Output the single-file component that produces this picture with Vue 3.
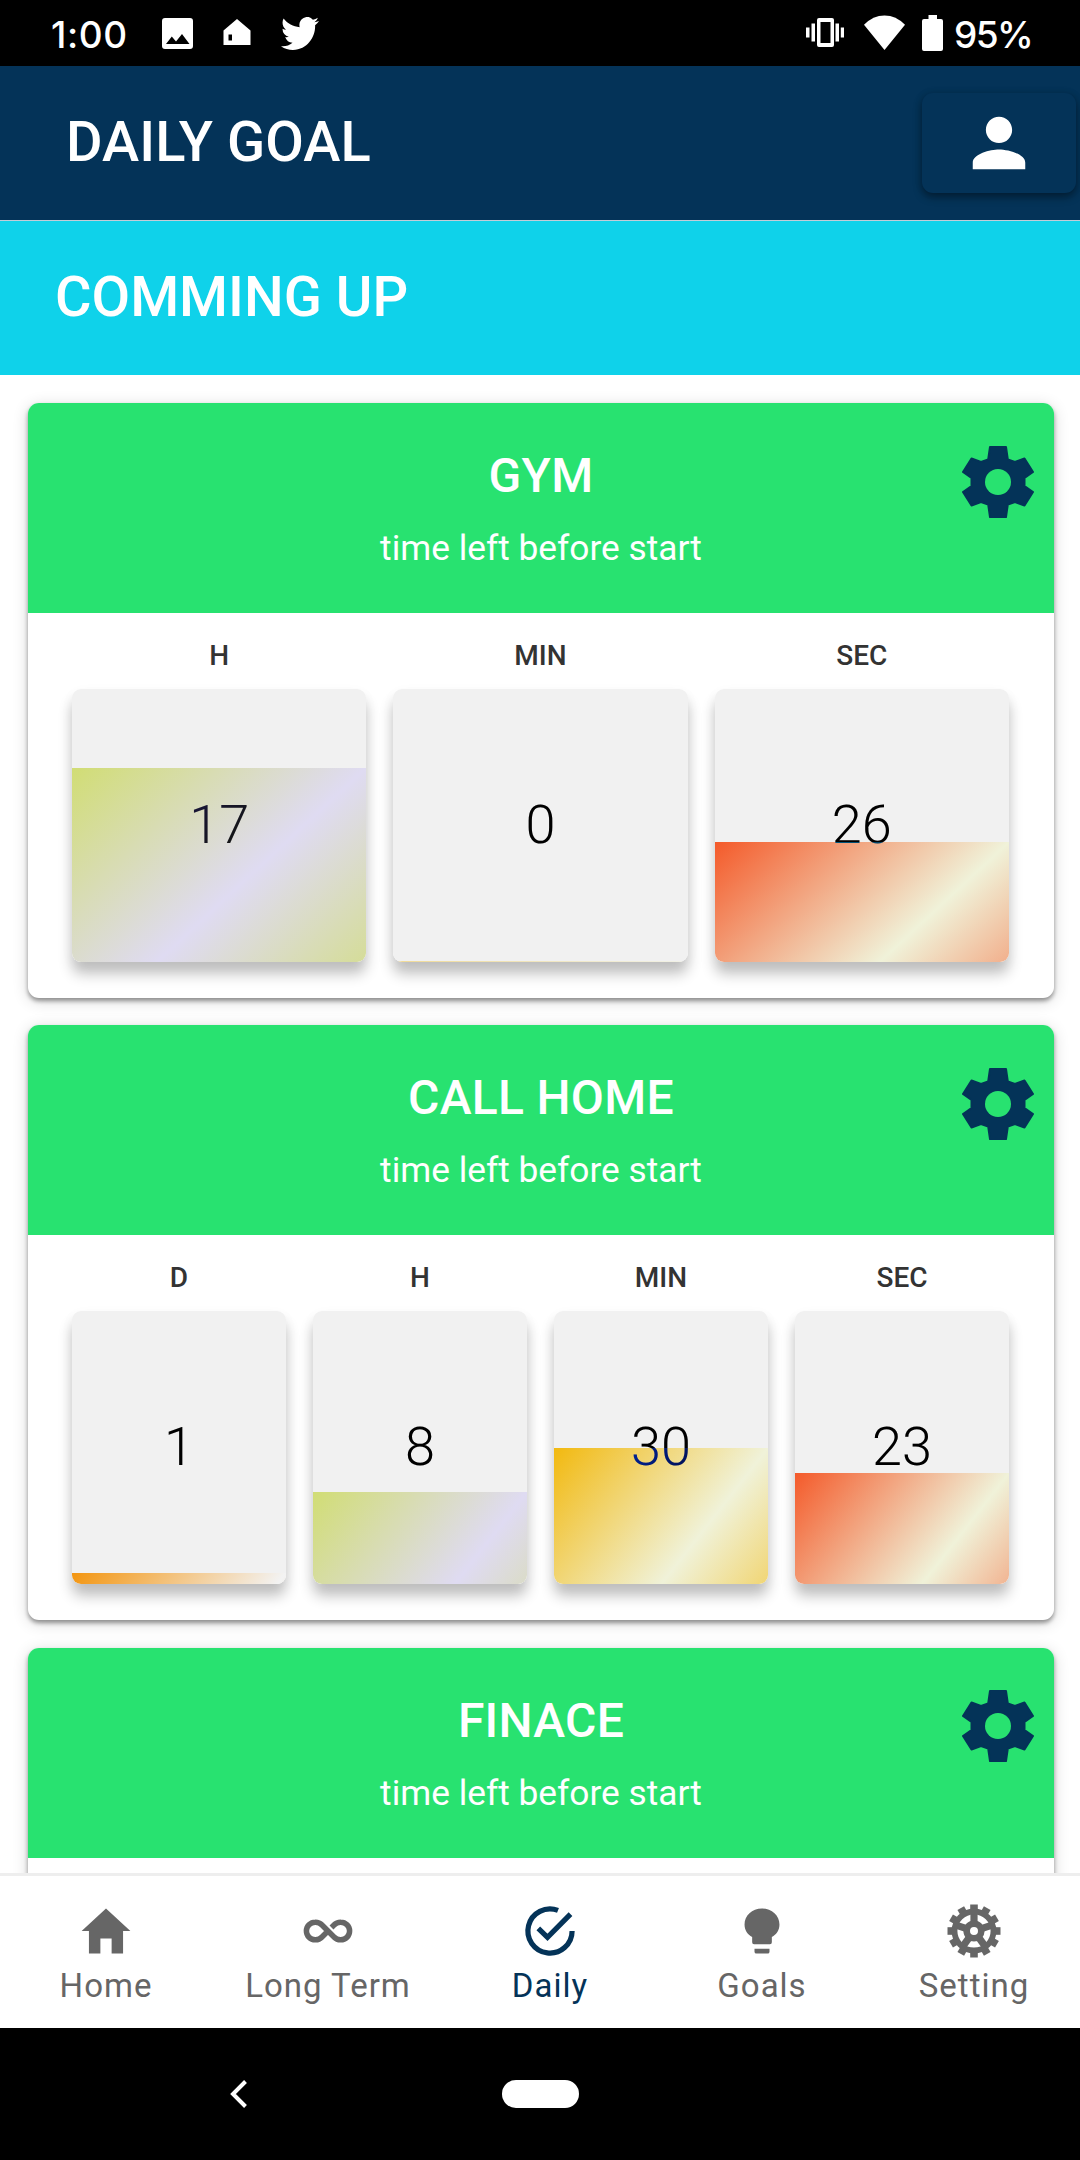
<script setup>
const cards = [
  {
    title: 'GYM',
    units: [
      { label: 'H', value: 17, kind: 'hour', fill: 194 },
      { label: 'MIN', value: 0, kind: 'minute empty', fill: 1 },
      { label: 'SEC', value: 26, kind: 'second', fill: 120 }
    ]
  },
  {
    title: 'CALL HOME',
    units: [
      { label: 'D', value: 1, kind: 'day', fill: 11 },
      { label: 'H', value: 8, kind: 'hour', fill: 92 },
      { label: 'MIN', value: 30, kind: 'minute', fill: 136 },
      { label: 'SEC', value: 23, kind: 'second', fill: 111 }
    ]
  },
  { title: 'FINACE', units: [] }
]
const teeth = Array.from({ length: 12 }, (_, i) => i * 30)
const spokes = [0, 72, 144, 216, 288]
</script>

<template>
  <div class="screen">
    <div class="status">
      <span class="clock">1:00</span>
      <svg class="s-image" width="31" height="31" viewBox="0 0 31 31"><path fill="#fff" fill-rule="evenodd" d="M3 0H28Q31 0 31 3V28Q31 31 28 31H3Q0 31 0 28V3Q0 0 3 0ZM4 26H27.500L20 16L14 23.500L9.800 18.500Z" /></svg>
      <svg class="s-house" width="28" height="26" viewBox="0 0 28 26"><path fill="#fff" fill-rule="evenodd" d="M14 0L27.500 11.500V26H.5V11.500ZM5.500 15.500V21.500H9V15.500Z" /></svg>
      <svg class="s-bird" width="38" height="33" viewBox="0 2.200 24 19.600" preserveAspectRatio="none"><path fill="#fff" d="M23.953 4.570a10 10 0 01-2.825.775 4.958 4.958 0 002.163-2.723c-.951.555-2.005.959-3.127 1.184a4.920 4.920 0 00-8.384 4.482C7.690 8.095 4.067 6.130 1.640 3.162a4.822 4.822 0 00-.666 2.475c0 1.710.870 3.213 2.188 4.096a4.904 4.904 0 01-2.228-.616v.060a4.923 4.923 0 003.946 4.827 4.996 4.996 0 01-2.212.085 4.936 4.936 0 004.604 3.417 9.867 9.867 0 01-6.102 2.105c-.390 0-.779-.023-1.170-.067a13.995 13.995 0 007.557 2.209c9.053 0 13.998-7.496 13.998-13.985 0-.210 0-.420-.015-.630A9.935 9.935 0 0024 4.590z" /></svg>
      <span class="grow"></span>
      <svg class="s-vibe" width="38" height="29" viewBox="0 0 38 29"><g fill="#fff"><path fill-rule="evenodd" d="M13 0H26Q28 0 28 2V27Q28 29 26 29H13Q11 29 11 27V2Q11 0 13 0ZM14.500 4V25H24.500V4Z" /><path d="M0 9.500h3.500v10H0zM5.500 5.500H9v18H5.500zM29.500 5.500H33v18H29.500zM34.800 9.500H38v10H34.800z" /></g></svg>
      <svg class="s-wifi" width="41" height="35" viewBox="0 0 41 35"><path fill="#fff" d="M20.500 35L0 9.800Q9 .5 20.500 .5T41 9.800Z" /></svg>
      <svg class="s-batt" width="21" height="36" viewBox="0 0 21 36"><path fill="#fff" d="M6.500 0h8.500v4h4q2 0 2 2v28q0 2-2 2H2q-2 0-2-2V6q0-2 2-2h4.500z" /></svg>
      <span class="pct">95%</span>
    </div>

    <header class="header">
      <h1>DAILY GOAL</h1>
      <button class="profile" aria-label="Profile">
        <svg width="70" height="70" viewBox="0 0 512 512"><path fill="#fff" d="M256 256c52.800 0 96-43.200 96-96s-43.200-96-96-96-96 43.200-96 96 43.200 96 96 96zm0 48c-63.600 0-192 32.400-192 96v48h384v-48c0-63.600-128.400-96-192-96z" /></svg>
      </button>
    </header>
    <div class="banner">COMMING UP</div>

    <main class="list">
      <section v-for="card in cards" :key="card.title" class="card">
        <div class="card-head">
          <h2>{{ card.title }}</h2>
          <p>time left before start</p>
          <svg class="gear" width="74" height="74" viewBox="-37 -37 74 74">
            <path fill="#043358" stroke="#043358" stroke-width="2" stroke-linejoin="round" d="M-8-35H8L9.800-22.500L17-20L26.500-23.500L35-10L26.500-4V4L35 10L26.500 23.500L17 20L9.800 22.500L8 35H-8L-9.800 22.500L-17 20L-26.500 23.500L-35 10L-26.500 4V-4L-35-10L-26.500-23.500L-17-20L-9.800-22.500Z" />
            <circle r="13" fill="#28e270" />
          </svg>
        </div>
        <div class="units">
          <div v-for="u in card.units" :key="u.label" class="unit">
            <span class="label">{{ u.label }}</span>
            <div class="box-shadow">
              <div class="box">
                <div class="fill" :class="u.kind" :style="{ height: u.fill + 'px' }"></div>
                <span class="value">{{ u.value }}</span>
              </div>
            </div>
          </div>
        </div>
      </section>
    </main>

    <nav class="tabs">
      <div class="tab">
        <svg width="60" height="60" viewBox="0 0 512 512"><path fill="#666" d="M208 448V320h96v128h97.600V256H464L256 64 48 256h62.400v192z" /></svg>
        <span>Home</span>
      </div>
      <div class="tab wide">
        <svg width="60" height="60" viewBox="-30 -30 60 60"><path fill="none" stroke="#666" stroke-width="5.500" d="M3.500-3.500L6-6A9 9 0 0 1 12.800-8.800A8.800 8.800 0 1 1 12.800 8.800A9 9 0 0 1 6 6L-6-6A9 9 0 0 0 -12.800-8.800A8.800 8.800 0 1 0 -12.800 8.800A9 9 0 0 0 -6 6L0 0" /></svg>
        <span>Long Term</span>
      </div>
      <div class="tab active">
        <svg width="60" height="60" viewBox="-30 -30 60 60"><g fill="none" stroke="#043358" stroke-width="5.200"><path d="M8-20.600A22.100 22.100 0 1 0 22.100 0" /><path d="M-11.700-2.700L-2.500 6.400L20.500-16.800" /></g></svg>
        <span>Daily</span>
      </div>
      <div class="tab">
        <svg width="60" height="60" viewBox="0 0 512 512"><path fill="#666" d="M192 408h128v24q0 16-16 16h-96q-16 0-16-16zM256 64c-86 0-149 60-149 136 0 48 25 85 65 108v44q0 16 16 16h136q16 0 16-16v-44c40-23 65-60 65-108 0-76-63-136-149-136z" /></svg>
        <span>Goals</span>
      </div>
      <div class="tab">
        <svg width="60" height="60" viewBox="-30 -30 60 60">
          <g fill="#666">
            <rect v-for="a in teeth" :key="a" x="-3.800" y="-26.500" width="7.600" height="7" :transform="`rotate(${a})`" />
            <rect v-for="a in spokes" :key="'s' + a" x="-3.600" y="-19" width="7.200" height="12" :transform="`rotate(${a})`" />
          </g>
          <circle r="19.500" fill="none" stroke="#666" stroke-width="5.800" />
          <circle r="7.300" fill="none" stroke="#666" stroke-width="6.600" />
        </svg>
        <span>Setting</span>
      </div>
    </nav>

    <div class="system">
      <svg class="back" width="18" height="28" viewBox="0 0 18 28"><path fill="none" stroke="#fff" stroke-width="4" d="M15.500 1.500L3 14L15.500 26.500" /></svg>
      <span class="pill"></span>
    </div>
  </div>
</template>

<style>
body {
  margin: 0;
}
</style>

<style scoped>
.screen {
  width: 1080px;
  height: 2160px;
  display: flex;
  flex-direction: column;
  overflow: hidden;
  background: #fff;
  font-family: Roboto, sans-serif;
}
.status {
  flex: none;
  display: flex;
  align-items: flex-start;
  box-sizing: border-box;
  height: 66px;
  padding: 0 50px 0 51px;
  background: #000;
  color: #fff;
  font: 500 37px/70px Inter, sans-serif;
}
.clock {
  width: 111px;
  letter-spacing: 0.6px;
}
.pct {
  width: 76px;
  white-space: nowrap;
  letter-spacing: -1.6px;
}
.grow {
  flex: 1;
}
.s-image { margin-top: 18px; }
.s-house { margin: 19px 0 0 30px; }
.s-bird { margin: 17px 0 0 30px; }
.s-vibe { margin: 18px 20px 0 0; }
.s-wifi { margin: 15px 17px 0 0; }
.s-batt { margin: 15px 11px 0 0; }

.header {
  flex: none;
  display: flex;
  align-items: center;
  justify-content: space-between;
  box-sizing: border-box;
  height: 155px;
  padding: 0 4px 0 66px;
  border-bottom: 1px solid #c3cdd8;
  background: #043358;
  color: #fff;
}
h1 {
  margin: 0;
  padding-bottom: 2px;
  font-size: 56px;
  font-weight: 500;
  letter-spacing: 0.1px;
}
.profile {
  display: flex;
  align-items: center;
  justify-content: center;
  width: 154px;
  height: 100px;
  border: 0;
  border-radius: 11px;
  background: #043358;
  box-shadow: 0 4px 8px rgba(0, 0, 0, 0.42), 0 0 9px rgba(0, 0, 0, 0.08);
}
.banner {
  flex: none;
  height: 154px;
  padding-left: 55px;
  background: #0fd2ea;
  color: #fff;
  font-size: 56px;
  font-weight: 500;
  line-height: 152px;
}
.list {
  flex: 1;
  min-height: 0;
  overflow: hidden;
  padding: 28px 26px 0 28px;
}
.card {
  height: 595px;
  margin-bottom: 27.4px;
  border-radius: 11px;
  background: #fff;
  box-shadow: 0 3px 4px rgba(0, 0, 0, 0.38), 0 3px 16px rgba(0, 0, 0, 0.16);
}
.card-head {
  position: relative;
  height: 210px;
  border-radius: 11px 11px 0 0;
  background: #28e270;
  color: #fff;
  text-align: center;
}
h2 {
  margin: 0;
  padding-top: 45px;
  font-size: 48px;
  font-weight: 500;
  line-height: 56px;
  letter-spacing: 0.3px;
}
.card-head p {
  margin: 0;
  padding-top: 23px;
  font-size: 35.3px;
  line-height: 42px;
}
.gear {
  position: absolute;
  top: 41.5px;
  right: 19px;
}
.units {
  display: flex;
  gap: 27px;
  padding: 26px 45px 0 44px;
}
.unit {
  flex: 1;
  text-align: center;
}
.label {
  display: block;
  height: 50px;
  color: #333;
  font-size: 28px;
  font-weight: 500;
  line-height: 33px;
}
.box-shadow {
  border-radius: 9px;
  box-shadow: 0 12px 14px rgba(0, 0, 0, 0.24), 0 4px 14px rgba(0, 0, 0, 0.04);
}
.box {
  position: relative;
  isolation: isolate;
  display: flex;
  align-items: center;
  justify-content: center;
  height: 273px;
  border-radius: 9px;
  overflow: hidden;
  background: #f1f1f1;
}
.fill {
  position: absolute;
  inset: auto 0 0;
  background-size: 100% 273px;
  background-repeat: no-repeat;
}
.day { background-image: linear-gradient(to bottom right, #f39510, #f3f3f3 50%, #f39510); }
.hour { background-image: linear-gradient(to bottom right, #d1dd74, #dfdbf2 50%, #d1dd74); }
.minute { background-image: linear-gradient(to bottom right, #f2b90f, #f0f2d9 50%, #f2b90f); }
.second { background-image: linear-gradient(to bottom right, #f45a2a, #f0f2d9 50%, #f45a2a); }
.empty { opacity: 0.4; }
.value {
  z-index: 1;
  padding-bottom: 2px;
  color: #f1f1f1;
  mix-blend-mode: difference;
  font-size: 54px;
  font-weight: 300;
}

.tabs {
  flex: none;
  display: flex;
  box-sizing: border-box;
  height: 155px;
  border-top: 3px solid #eee;
  background: #fff;
}
.tab {
  width: 212px;
  display: flex;
  flex-direction: column;
  align-items: center;
  padding-top: 25px;
  color: #666;
  font-size: 33px;
  line-height: 40px;
  letter-spacing: 1px;
}
.tab span {
  margin-top: 5px;
}
.tab.wide {
  width: 232px;
}
.active {
  color: #043358;
}
.system {
  flex: none;
  display: flex;
  align-items: center;
  height: 132px;
  background: #000;
}
.back {
  margin-left: 230px;
}
.pill {
  width: 77px;
  height: 28px;
  margin-left: 254px;
  border-radius: 14px;
  background: #fff;
}
</style>
